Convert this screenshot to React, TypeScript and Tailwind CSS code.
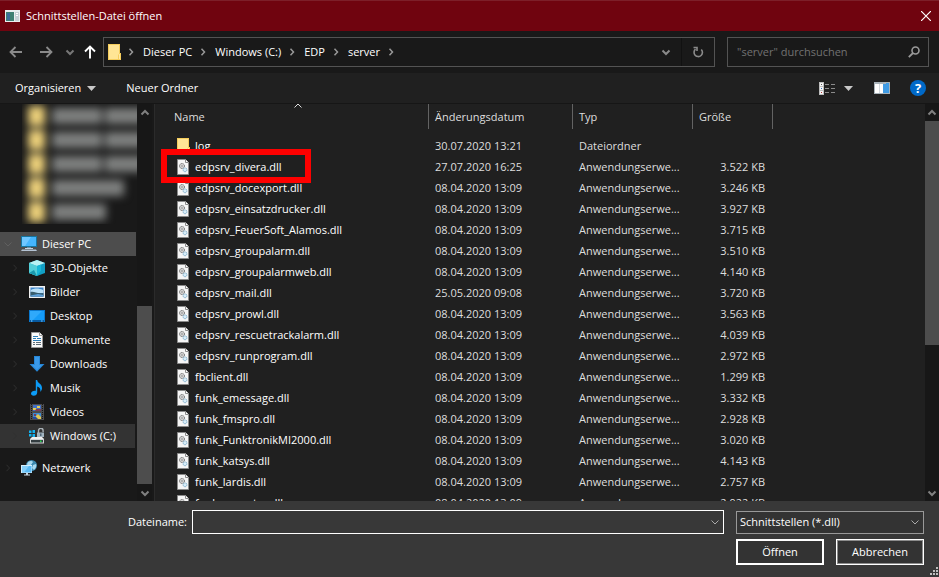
import type { ReactNode } from 'react';

const files = [
    { name: 'log', date: '30.07.2020 13:21', type: 'Dateiordner', size: '', folder: true },
    { name: 'edpsrv_divera.dll', date: '27.07.2020 16:25', size: '3.522 KB', marked: true },
    { name: 'edpsrv_docexport.dll', date: '08.04.2020 13:09', size: '3.246 KB' },
    { name: 'edpsrv_einsatzdrucker.dll', date: '08.04.2020 13:09', size: '3.927 KB' },
    { name: 'edpsrv_FeuerSoft_Alamos.dll', date: '08.04.2020 13:09', size: '3.715 KB' },
    { name: 'edpsrv_groupalarm.dll', date: '08.04.2020 13:09', size: '3.510 KB' },
    { name: 'edpsrv_groupalarmweb.dll', date: '08.04.2020 13:09', size: '4.140 KB' },
    { name: 'edpsrv_mail.dll', date: '25.05.2020 09:08', size: '3.720 KB' },
    { name: 'edpsrv_prowl.dll', date: '08.04.2020 13:09', size: '3.563 KB' },
    { name: 'edpsrv_rescuetrackalarm.dll', date: '08.04.2020 13:09', size: '4.039 KB' },
    { name: 'edpsrv_runprogram.dll', date: '08.04.2020 13:09', size: '2.972 KB' },
    { name: 'fbclient.dll', date: '08.04.2020 13:09', size: '1.299 KB' },
    { name: 'funk_emessage.dll', date: '08.04.2020 13:09', size: '3.332 KB' },
    { name: 'funk_fmspro.dll', date: '08.04.2020 13:09', size: '2.928 KB' },
    { name: 'funk_FunktronikMI2000.dll', date: '08.04.2020 13:09', size: '3.020 KB' },
    { name: 'funk_katsys.dll', date: '08.04.2020 13:09', size: '4.143 KB' },
    { name: 'funk_lardis.dll', date: '08.04.2020 13:09', size: '2.757 KB' },
    { name: 'funk_operator.dll', date: '08.04.2020 13:09', size: '2.922 KB' },
];

const path = ['Dieser PC', 'Windows (C:)', 'EDP', 'server'];

const hiddenFolders = [
    ['w-[50px]', 'w-10'],
    ['w-[50px]', 'w-10'],
    ['w-[50px]', 'w-10'],
    ['w-[72px]'],
    ['w-[54px]'],
];

/* ===== Icons ===== */

function Chevron({ dir, className = '' }: { dir: 'up' | 'down' | 'right'; className?: string }) {
    const d = { up: 'M1.5 6.5 5 3l3.5 3.5', down: 'M1.5 3.5 5 7l3.5-3.5', right: 'M3.5 1.8 6.5 5l-3 3.2' }[dir];
    return (
        <svg viewBox="0 0 10 10" className={`size-[10px] shrink-0 fill-none stroke-current ${className}`}>
            <path d={d} />
        </svg>
    );
}

function Triangle() {
    return (
        <svg viewBox="0 0 9 5" className="h-[5px] w-[9px] fill-[#c8c8c8]">
            <path d="M0 0h9L4.5 5z" />
        </svg>
    );
}

function Icon({ children }: { children: ReactNode }) {
    return (
        <svg viewBox="0 0 16 16" className="size-4 shrink-0">
            {children}
        </svg>
    );
}

function FolderIcon() {
    return (
        <svg viewBox="0 0 14 16" className="h-4 w-[14px] shrink-0">
            <path d="M0 0h12v9h1v7H0z" fill="#f5cd5c" />
            <path d="M1 1h10v9l-1 1v4H1z" fill="#ffe595" />
            <path d="M11 10h1v5h-1z" fill="#ffe9a6" />
        </svg>
    );
}

function DllIcon() {
    return (
        <svg viewBox="0 0 12 16" className="h-4 w-3 shrink-0">
            <path d="M.5.5h8l3 3v12H.5z" fill="#f6f6f6" stroke="#8b8b8b" />
            <path d="M8.5.5v3h3" fill="#fff" stroke="#8b8b8b" />
            <circle cx="5" cy="7" r="2.5" fill="#ddd" stroke="#666" strokeDasharray="1.3 .7" />
            <circle cx="5" cy="7" r=".9" fill="#fff" stroke="#777" strokeWidth=".6" />
            <circle cx="8" cy="10.8" r="1.9" fill="#d8edf8" stroke="#6fa3c4" strokeDasharray="1 .5" />
        </svg>
    );
}

const pcIcon = (
    <Icon>
        <path d="M0 0h16v11H0z" fill="#16759f" />
        <path d="M1 1h14v9H1z" fill="#45b5fc" />
        <path d="M1 1h9L4 10H1z" fill="#70c7ff" />
        <path d="M6 11h4v1H6z" fill="#6c8ba0" />
        <path d="M4 12h8v1H4z" fill="#c4d3dd" />
        <path d="M1 13.5h14l1 1.5H0z" fill="#b4c3d4" />
    </Icon>
);

const networkIcon = (
    <Icon>
        <circle cx="10.5" cy="5.5" r="5.5" fill="#3a87ad" />
        <path d="M6 4c2-4 5-3 6-2l-2 3-3 1zM12 5l3-1c1 3-1 5-2 6l-2-2z" fill="#a8d9ef" />
        <path d="M0 5h11v8H0z" fill="#d4effd" />
        <path d="M1 6h9.500v6.500H1z" fill="#58b9f4" />
        <path d="M1 6h7l-5 6.500H1z" fill="#84cffa" />
        <path d="M5 13h2v1.500H5zM3 14.500h6v1H3z" fill="#c5d4df" />
    </Icon>
);

const places = [
    {
        title: '3D-Objekte',
        icon: (
            <Icon>
                <path d="M8 0 0 3v10l8 3z" fill="#2ec3d2" />
                <path d="m8 0 8 3v10l-8 3z" fill="#129fc4" />
                <path d="M8 0 0 3l8 3 8-3z" fill="#b9f2f4" />
                <path d="M0 3l8 3v10l-8-3z" fill="#53cfd9" />
                <path d="M8 6v10l4-5.500V4.500z" fill="#18b8d8" />
                <path d="M0 13l5-3 3 6z" fill="#1a98ae" />
            </Icon>
        ),
    },
    {
        title: 'Bilder',
        icon: (
            <Icon>
                <path d="M0 2h16v12H0z" fill="#f1f1f1" />
                <path d="M1.500 3.500h13v9h-13z" fill="#3c84cb" />
                <path d="M2 6c3-2 8-2 12 0v3H2z" fill="#b9e0f7" />
                <path d="M1.500 8c4-1 6 2 13 1v3.500h-13z" fill="#365d6e" />
                <path d="M1.500 11.500 9 10l5.500 1v1.500h-13z" fill="#5ca0da" />
            </Icon>
        ),
    },
    {
        title: 'Desktop',
        icon: (
            <Icon>
                <path d="M0 2h16v12H0z" fill="#0a78ce" />
                <path d="M1 3h14v9H1z" fill="#159bf7" />
                <path d="M1 3h12L4 12H1z" fill="#2fa9fb" />
                <path d="M1 12.500h1.500v1H1zM4 12.500h8v1H4zM13 12.500h2v1h-2z" fill="#063d72" />
                <path d="M2 12.500h1v1H2zM12.500 12.500h1v1h-1z" fill="#9bd7ff" />
            </Icon>
        ),
    },
    {
        title: 'Dokumente',
        icon: (
            <Icon>
                <path d="M2.500.5h8l3 3v12h-11z" fill="#fafafa" stroke="#999" />
                <path d="M10.500.5v3h3" fill="#fff" stroke="#999" />
                <path d="M4 4.500h5M4 6.500h3M8 6.500h4M4 8.500h8" stroke="#2c7eb8" />
                <path d="M4 10.500h2M7 10.500h5M4 12.500h2M7 12.500h5" stroke="#5e6c76" />
            </Icon>
        ),
    },
    {
        title: 'Downloads',
        icon: (
            <Icon>
                <path d="M5 0h6v8h4.500L8 15.700.5 8H5z" fill="#2686d6" />
                <path d="M6 1h4v8h3L8 14 3 9h3z" fill="#3a99e8" />
            </Icon>
        ),
    },
    {
        title: 'Musik',
        icon: (
            <Icon>
                <path
                    d="M6.800 0h1.400c0 3 4.800 3.500 4.800 8 0 1.700-.7 2.800-1.800 4 .7-3-.6-5-3-5.500v6c0 2-1.700 3.300-3.500 3.300-1.600 0-2.700-.9-2.700-2.200 0-2 2.600-3.400 4.800-2.800z"
                    fill="#0c9bf6"
                />
            </Icon>
        ),
    },
    {
        title: 'Videos',
        icon: (
            <Icon>
                <path d="M1 0h14v16H1z" fill="#4c4c4c" />
                <path d="M2.500 0v16M13.500 0v16" stroke="#151515" strokeDasharray="1 1" />
                <path d="M4 1h8v6H4z" fill="#416fc4" />
                <path d="M4 9h8v6H4z" fill="#3a8ad2" />
                <path d="M4 4h3l1 2H4zM8 2h3v2H8z" fill="#e3cc52" />
                <path d="M7 5h5v2H6zM5 10h2v2H5z" fill="#7c3d54" />
                <path d="M7 12l2-2 3 3v2H6z" fill="#e1c751" />
                <path d="M4 13h3l2 2H4z" fill="#254a9b" />
            </Icon>
        ),
    },
    {
        title: 'Windows (C:)',
        active: true,
        icon: (
            <Icon>
                <path d="M0 2.500h2.500V5H0zM3.500 2H6v3H3.500zM0 6h2.500v2.500H0zM3.500 6H6v3H3.500z" fill="#12b2f0" />
                <path d="M9.500 5V2.500a2.300 2.300 0 0 1 4.600 0V4" fill="none" stroke="#a9b1b6" strokeWidth="1.400" />
                <path d="M8 4.500h7V9H8z" fill="#a3b5c1" />
                <path d="M11 5.500h1.500V8H11z" fill="#536776" />
                <path d="M3 9h10l2 2H1z" fill="#f0f0f0" />
                <path d="M1 11h14v4.500H1z" fill="#d0d3d5" />
                <path d="M2 12h12v2.500H2z" fill="#333c40" />
                <path d="M11 12.500h1.500V14H11z" fill="#26e04e" />
            </Icon>
        ),
    },
];

/* ===== Building blocks ===== */

function Scrollbar({ thumb, className }: { thumb: ReactNode; className: string }) {
    return (
        <div className={`flex shrink-0 flex-col items-center bg-[#171717] text-[#808080] ${className}`}>
            <div className="flex h-[17px] shrink-0 items-center">
                <Chevron dir="up" className="stroke-2" />
            </div>
            <div className="flex w-full flex-1 flex-col">{thumb}</div>
            <div className="flex h-[17px] shrink-0 items-center">
                <Chevron dir="down" className="stroke-2" />
            </div>
        </div>
    );
}

function TitleBar() {
    return (
        <header className="flex h-[31px] shrink-0 items-center border-t border-[#7d1f29] bg-[#70040f] pr-2 pl-[5px]">
            <svg viewBox="0 0 15 12" className="h-3 w-[15px]">
                <path d="M0 0h15v12H0z" fill="#e9eef0" />
                <path d="M1 2h8v9H1z" fill="#3f8073" />
                <path d="M2 3h3v7H2z" fill="#3c6f9b" />
                <path d="M10 2h4v9h-4z" fill="#c6d1d6" />
                <path d="M11 3h2v1h-2zM11 5h2v1h-2z" fill="#fff" />
            </svg>
            <h1 className="ml-[6px] flex-1">Schnittstellen-Datei öffnen</h1>
            <button type="button" aria-label="Schließen">
                <svg viewBox="0 0 10 10" className="size-[10px] fill-none stroke-white">
                    <path d="m0 0 10 10M10 0 0 10" strokeWidth="1.200" />
                </svg>
            </button>
        </header>
    );
}

function AddressBar() {
    return (
        <nav className="flex h-[42px] shrink-0 items-center bg-[#191919] pr-[10px] pl-[9px]">
            <button type="button" aria-label="Zurück" className="text-[#8a8a8a]">
                <svg viewBox="0 0 14 14" className="size-[14px] fill-none stroke-current">
                    <path d="M13 7H1.500M6.500 2l-5 5 5 5" strokeWidth="1.800" />
                </svg>
            </button>
            <button type="button" aria-label="Vorwärts" className="ml-4 text-[#8a8a8a]">
                <svg viewBox="0 0 14 14" className="size-[14px] fill-none stroke-current">
                    <path d="M1 7h11.500M7.500 2l5 5-5 5" strokeWidth="1.800" />
                </svg>
            </button>
            <button type="button" aria-label="Verlauf" className="ml-3 text-[#777]">
                <Chevron dir="down" className="stroke-2" />
            </button>
            <button type="button" aria-label="Nach oben" className="ml-2 text-white">
                <svg viewBox="0 0 14 14" className="size-[14px] fill-none stroke-current">
                    <path d="M7 13.500V1.500M2 6.500l5-5 5 5" strokeWidth="1.900" />
                </svg>
            </button>
            <div className="ml-[6px] flex h-[30px] flex-1 items-center border border-[#535353] pl-1">
                <FolderIcon />
                <ol className="flex flex-1 items-center">
                    <li className="mr-[5px] ml-1 flex text-[#999]">
                        <Chevron dir="right" className="stroke-[1.5]" />
                    </li>
                    {path.map((part) => (
                        <li key={part} className="flex items-center">
                            <button type="button" className="ml-[2px]">
                                {part}
                            </button>
                            <Chevron dir="right" className="mr-[5px] ml-[6px] stroke-[1.5] text-[#999]" />
                        </li>
                    ))}
                </ol>
                <button type="button" aria-label="Vorherige Orte" className="mr-[10px] text-[#8a8a8a]">
                    <Chevron dir="down" className="stroke-2" />
                </button>
                <button
                    type="button"
                    aria-label="Aktualisieren"
                    className="flex h-full w-[33px] items-center justify-center border-l border-[#111] text-[#8a8a8a]"
                >
                    <svg viewBox="0 0 12 12" className="size-3 fill-none stroke-current">
                        <path d="M9.300 3.500a4.200 4.200 0 1 1-5.800-.3M1.500 1.500H5V5" strokeWidth="1.600" />
                    </svg>
                </button>
            </div>
            <div className="ml-3 flex h-[30px] w-[202px] items-center border border-[#535353] pr-2 pl-[9px]">
                <input
                    type="search"
                    aria-label="server durchsuchen"
                    placeholder={'"server" durchsuchen'}
                    className="w-0 flex-1 bg-transparent outline-none placeholder:text-[#727272]"
                />
                <svg viewBox="0 0 12 12" className="size-3 fill-none stroke-[#9a9a9a]">
                    <circle cx="7.500" cy="4.500" r="3.500" strokeWidth="1.600" />
                    <path d="M5 7 .8 11.200" strokeWidth="1.800" />
                </svg>
            </div>
        </nav>
    );
}

function Toolbar() {
    return (
        <div className="flex h-[31px] shrink-0 items-center border-b border-[#161616] bg-[#202020] pr-[13px] pl-[15px]">
            <button type="button" className="flex items-center gap-[6px]">
                Organisieren
                <Triangle />
            </button>
            <button type="button" className="ml-[30px]">
                Neuer Ordner
            </button>
            <button type="button" aria-label="Ansicht" className="ml-auto flex items-center gap-[9px]">
                <svg viewBox="0 0 16 13" className="h-[13px] w-4">
                    <path d="M0 0h5v13H0z" fill="#bdbdbd" />
                    <path d="M1 1h3v3H1zM1 5h3v3H1zM1 9h3v3H1z" fill="#f4f4f4" />
                    <path d="M2 2h1v1H2z" fill="#555" />
                    <path d="M2 6h1v1H2z" fill="#3572c0" />
                    <path d="M2 10h1v1H2z" fill="#b03030" />
                    <path d="M6 2.500h4M12 2.500h4M6 6.500h4M12 6.500h4M6 10.500h4M12 10.500h4" stroke="#8b8b8b" />
                </svg>
                <Triangle />
            </button>
            <button type="button" aria-label="Vorschaufenster" className="ml-[21px]">
                <svg viewBox="0 0 16 12" className="h-3 w-4">
                    <path d="M0 0h16v12H0z" fill="#a9b3ba" />
                    <path d="M1 2h4v9H1zM5.500 2H9v9H5.500z" fill="#fff" />
                    <path d="M9 2h6v9H9z" fill="#3f9be4" />
                    <path d="M12 1h3v1h-3z" fill="#3f9be4" />
                </svg>
            </button>
            <button
                type="button"
                aria-label="Hilfe"
                className="ml-5 flex size-[16px] items-center justify-center rounded-full bg-[#0069c8] text-[13px] font-bold"
            >
                ?
            </button>
        </div>
    );
}

function Sidebar() {
    return (
        <aside className="flex w-[155px] shrink-0 border-r border-[#2b2b2b] bg-[#191919]">
            <div className="w-[137px] shrink-0">
                <div className="mb-2 ml-[22px] h-[120px] overflow-hidden" aria-hidden="true">
                    <div className="blur-[4px]">
                        {hiddenFolders.map((words, i) => (
                            <div key={i} className="flex h-6 items-center gap-[3px]">
                                <span className="mr-1 ml-[6px] h-5 w-[17px] shrink-0 bg-[#ecd07a]" />
                                {words.map((w, j) => (
                                    <span key={j} className={`h-4 shrink-0 bg-[#7e807f] ${w}`} />
                                ))}
                            </div>
                        ))}
                    </div>
                </div>
                <a href="#pc" className="mr-px flex h-6 items-center bg-[#4d4d4d] pl-[3px]">
                    <Chevron dir="down" className="mr-2 text-[#606060]" />
                    {pcIcon}
                    <span className="ml-[5px]">Dieser PC</span>
                </a>
                {places.map((place) => (
                    <a
                        key={place.title}
                        href={`#${place.title}`}
                        className={`mr-[2px] flex h-6 items-center pl-[10px] ${place.active ? 'bg-[#333]' : ''}`}
                    >
                        <Chevron dir="right" className="mr-[9px] text-[#303030]" />
                        {place.icon}
                        <span className="ml-[5px] whitespace-nowrap">{place.title}</span>
                    </a>
                ))}
                <a href="#network" className="mt-2 flex h-6 items-center pl-[3px]">
                    <Chevron dir="right" className="mr-2 text-[#303030]" />
                    {networkIcon}
                    <span className="ml-[5px]">Netzwerk</span>
                </a>
            </div>
            <Scrollbar
                className="w-[15px]"
                thumb={
                    <>
                        <div className="flex-1" />
                        <div className="h-[178px] bg-[#4d4d4d]" />
                    </>
                }
            />
        </aside>
    );
}

function FileTable() {
    return (
        <div className="min-w-0 flex-1 overflow-hidden">
            <table className="w-full table-fixed border-separate border-spacing-0 text-left text-[#dedede]">
                <colgroup>
                    <col className="w-[274px]" />
                    <col className="w-[144px]" />
                    <col className="w-[120px]" />
                    <col className="w-[80px]" />
                    <col />
                </colgroup>
                <thead>
                    <tr className="h-[25px]">
                        <th className="border-r border-[#636363] pl-[19px] font-normal">
                            <div className="relative">
                                Name
                                <Chevron dir="up" className="absolute -top-2 left-[119px]" />
                            </div>
                        </th>
                        <th className="border-r border-[#636363] pl-[6px] font-normal">Änderungsdatum</th>
                        <th className="border-r border-[#636363] pl-[6px] font-normal">Typ</th>
                        <th className="border-r border-[#636363] pl-[6px] font-normal">Größe</th>
                        <th />
                    </tr>
                </thead>
                <tbody>
                    <tr className="h-[6px]" />
                    {files.map((file) => (
                        <tr key={file.name} className="h-[21px]">
                            <td className="relative pl-[22px] text-white">
                                <div className="flex items-center">
                                    <span className="flex w-[18px]">{file.folder ? <FolderIcon /> : <DllIcon />}</span>
                                    {file.name}
                                </div>
                                {file.marked && (
                                    <div className="absolute -top-[7px] left-[6px] z-10 h-[34px] w-[150px] border-6 border-[#fe0000]" />
                                )}
                            </td>
                            <td className="pl-[6px]">{file.date}</td>
                            <td className="pl-[6px]">{file.type ?? 'Anwendungserwe...'}</td>
                            <td className="pr-2 text-right">{file.size}</td>
                            <td />
                        </tr>
                    ))}
                </tbody>
            </table>
        </div>
    );
}

function Footer() {
    return (
        <form className="shrink-0 bg-[#383838] pt-[9px] pr-[15px] pb-3" onSubmit={(e) => e.preventDefault()}>
            <div className="flex items-center">
                <label htmlFor="filename" className="w-[187px] text-right">
                    Dateiname:
                </label>
                <div className="ml-[5px] flex h-6 flex-1 items-center border border-white pr-[3px]">
                    <input id="filename" type="text" className="h-full flex-1 bg-transparent px-1 outline-none" />
                    <button type="button" aria-label="Dateinamen anzeigen" className="text-[#aaa]">
                        <Chevron dir="down" />
                    </button>
                </div>
                <div className="relative ml-3 flex w-[188px] items-center">
                    <select
                        aria-label="Dateityp"
                        className="h-[23px] w-full appearance-none border border-[#999] bg-[#333] pl-[3px] outline-none"
                    >
                        <option>Schnittstellen (*.dll)</option>
                    </select>
                    <Chevron dir="down" className="pointer-events-none absolute right-1 text-[#aaa]" />
                </div>
            </div>
            <div className="mt-[5px] flex justify-end gap-3">
                <button type="submit" className="h-[26px] w-[88px] border-2 border-white bg-[#333]">
                    Öffnen
                </button>
                <button
                    type="button"
                    className="h-[26px] w-[88px] border border-white bg-[#333] inset-ring inset-ring-[#8c8c8c]"
                >
                    Abbrechen
                </button>
            </div>
            <svg viewBox="0 0 8 8" className="absolute right-[1px] bottom-[2px] size-2 fill-[#bdbdbd]">
                <path d="M6 0h2v2H6zM3 3h2v2H3zM6 3h2v2H6zM0 6h2v2H0zM3 6h2v2H3zM6 6h2v2H6z" />
            </svg>
        </form>
    );
}

export default function App() {
    return (
        <div className="relative flex h-screen flex-col overflow-hidden bg-[#202020] font-['Open_Sans','Noto_Sans',sans-serif] text-[11px] leading-4 text-white">
            <TitleBar />
            <AddressBar />
            <Toolbar />
            <main className="flex min-h-0 flex-1 overflow-hidden">
                <Sidebar />
                <FileTable />
                <Scrollbar className="w-[14px]" thumb={<div className="h-[224px] bg-[#4d4d4d]" />} />
            </main>
            <Footer />
        </div>
    );
}
